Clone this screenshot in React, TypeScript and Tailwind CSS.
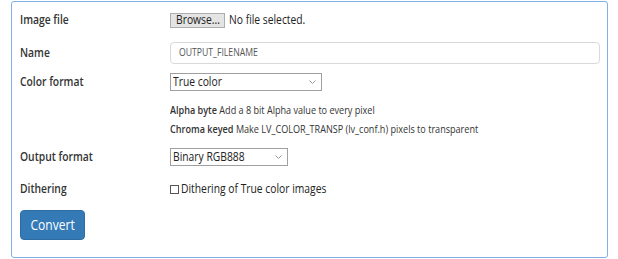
import React from "react";

const Chevron = () => (
  <svg width="7" height="4" viewBox="0 0 7 4" className="shrink-0">
    <path d="M0.5 0.5 L3.5 3.5 L6.5 0.5" fill="none" stroke="#9a9a9a" strokeWidth="1" />
  </svg>
);

const T = ({ children, className = "" }: { children: React.ReactNode; className?: string }) => (
  <span className={"inline-block origin-left scale-x-[0.825] whitespace-nowrap " + className}>{children}</span>
);

export default function App() {
  return (
    <div className="w-[618px] h-[259px] bg-white pt-[1px] pl-[11px]" style={{ fontFamily: '"Open Sans", sans-serif' }}>
      <div className="w-[597px] h-[257px] border border-[#7fb0e6] rounded-[3px] pl-[8px] pt-[10px] text-[#333]">
        {/* Image file */}
        <div className="flex items-center h-[16px]">
          <div className="w-[150px] text-[12.5px] font-semibold"><T>Image file</T></div>
          <div className="flex items-center">
            <div className="w-[55px] h-[15px] pl-[5px] flex items-center border border-[#adadad] bg-[#e4e4e4] text-[12.5px] text-[#222] leading-none"><T>Browse...</T></div>
            <span className="ml-[4px] text-[12.5px] text-[#222]"><T>No file selected.</T></span>
          </div>
        </div>
        {/* Name */}
        <div className="flex items-center h-[22px] mt-[14px]">
          <div className="w-[150px] text-[12.5px] font-semibold"><T>Name</T></div>
          <div className="w-[430px] h-[22px] border border-[#d9d9d9] rounded-[4px] flex items-center pl-[8px] text-[10.5px] text-[#555]"><T>OUTPUT_FILENAME</T></div>
        </div>
        {/* Color format */}
        <div className="flex items-center h-[18px] mt-[9px]">
          <div className="w-[150px] text-[12.5px] font-semibold"><T>Color format</T></div>
          <div className="w-[152px] h-[18px] border border-[#a0a0a0] flex items-center justify-between pl-[2px] pr-[5px] text-[12.5px] text-[#222]">
            <T>True color</T>
            <Chevron />
          </div>
        </div>
        {/* Hints */}
        <div className="pl-[150px] mt-[10px] text-[11px] text-[#333]">
          <div className="h-[18px] flex items-center"><T><span className="font-semibold mr-[3px]">Alpha byte</span>Add a 8 bit Alpha value to every pixel</T></div>
          <div className="h-[18px] flex items-center mt-[1px]"><T><span className="font-semibold mr-[3px]">Chroma keyed</span>Make LV_COLOR_TRANSP (lv_conf.h) pixels to transparent</T></div>
        </div>
        {/* Output format */}
        <div className="flex items-center h-[18px] mt-[10px]">
          <div className="w-[150px] text-[12.5px] font-semibold"><T>Output format</T></div>
          <div className="w-[118px] h-[18px] border border-[#a0a0a0] flex items-center justify-between pl-[2px] pr-[5px] text-[12.5px] text-[#222]">
            <T>Binary RGB888</T>
            <Chevron />
          </div>
        </div>
        {/* Dithering */}
        <div className="flex items-center h-[16px] mt-[15px]">
          <div className="w-[150px] text-[12.5px] font-semibold"><T>Dithering</T></div>
          <div className="flex items-center text-[12.5px] text-[#222]">
            <span className="w-[9px] h-[9px] border border-[#555] mr-[2px] inline-block shrink-0" />
            <T>Dithering of True color images</T>
          </div>
        </div>
        {/* Convert */}
        <div className="mt-[13px]">
          <div className="w-[65px] h-[30px] rounded-[4px] bg-[#337ab7] border border-[#2e6da4] text-white text-[14.5px] flex items-center justify-center">
            <span className="inline-block origin-center scale-x-[0.83] whitespace-nowrap">Convert</span>
          </div>
        </div>
      </div>
    </div>
  );
}
